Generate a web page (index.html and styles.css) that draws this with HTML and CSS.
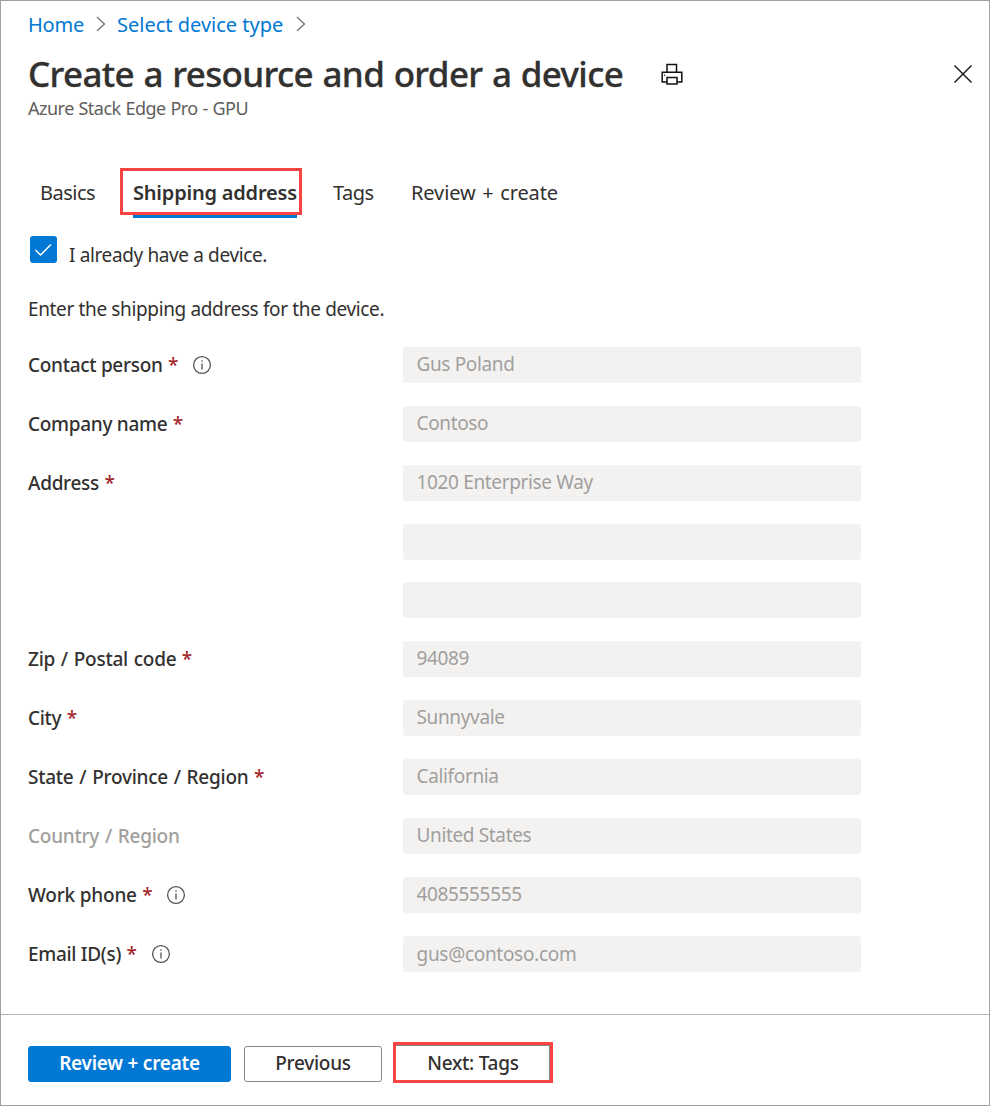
FILE: index.html
```html
<!DOCTYPE html>
<html lang="en">
<head>
<meta charset="utf-8">
<title>Create a resource and order a device</title>
<link rel="stylesheet" href="styles.css">
</head>
<body>
<main class="blade">
  <nav class="breadcrumb">
    <a class="crumb-home">Home</a>
    <svg class="chevron" width="10" height="16" viewBox="0 0 10 16"><path d="M1 1l7.500 7L1 15"/></svg>
    <a class="crumb-type">Select device type</a>
    <svg class="chevron" width="10" height="16" viewBox="0 0 10 16"><path d="M1 1l7.500 7L1 15"/></svg>
  </nav>
  <header class="header">
    <h1 class="title">Create a resource and order a device</h1>
    <svg class="print" width="22" height="22" viewBox="0 0 22 22"><path d="M6 9V1.500h9.500V9M5.500 19H1.200V9.200h19.600V19H16M6 14.500h10V21H6z"/><path class="dot" d="M3 11.500h1.200v1.200H3z"/></svg>
    <svg class="close" width="20" height="20" viewBox="0 0 20 20"><path d="M1.500 1.500l17 17M18.500 1.500l-17 17"/></svg>
  </header>
  <p class="subtitle">Azure Stack Edge Pro - GPU</p>
  <div class="tabs">
    <a class="tab tab-basics">Basics</a>
    <a class="tab tab-active">Shipping address</a>
    <a class="tab tab-tags">Tags</a>
    <a class="tab tab-review">Review + create</a>
  </div>
  <label class="device-check">
    <span class="checkbox"><svg width="27" height="27" viewBox="0 0 27 27"><path d="M5.500 14l5 5L21 8.500"/></svg></span>
    <span class="check-text">I already have a device.</span>
  </label>
  <p class="intro">Enter the shipping address for the device.</p>
  <form class="form">
    <div class="label"><span>Contact person</span><b class="req">*</b><svg class="info" width="20" height="20" viewBox="0 0 20 20"><circle cx="10" cy="10" r="8.400"/><path d="M10 8.500v6M10 5.200v1.600"/></svg></div><div class="field">Gus Poland</div>
    <div class="label"><span>Company name</span><b class="req">*</b></div><div class="field">Contoso</div>
    <div class="label"><span>Address</span><b class="req">*</b></div><div class="field">1020 Enterprise Way</div>
    <div class="label"></div><div class="field"></div>
    <div class="label"></div><div class="field"></div>
    <div class="label slashed"><span>Zip / Postal code</span><b class="req">*</b></div><div class="field">94089</div>
    <div class="label"><span>City</span><b class="req">*</b></div><div class="field">Sunnyvale</div>
    <div class="label slashed"><span>State / Province / Region</span><b class="req">*</b></div><div class="field">California</div>
    <div class="label slashed disabled"><span>Country / Region</span></div><div class="field">United States</div>
    <div class="label phone"><span>Work phone</span><b class="req">*</b><svg class="info" width="20" height="20" viewBox="0 0 20 20"><circle cx="10" cy="10" r="8.400"/><path d="M10 8.500v6M10 5.200v1.600"/></svg></div><div class="field">4085555555</div>
    <div class="label email"><span>Email ID(s)</span><b class="req">*</b><svg class="info" width="20" height="20" viewBox="0 0 20 20"><circle cx="10" cy="10" r="8.400"/><path d="M10 8.500v6M10 5.200v1.600"/></svg></div><div class="field email">gus@contoso.com</div>
  </form>
  <footer class="footer">
    <button class="btn primary">Review + create</button>
    <button class="btn previous">Previous</button>
    <button class="btn next">Next: Tags</button>
  </footer>
</main>
</body>
</html>
```
FILE: styles.css
```css
* { box-sizing: border-box; }
body { margin: 0; background: #fff; font-family: "Noto Sans", "Open Sans", sans-serif; color: #323130; }
p, h1 { margin: 0; }
svg { fill: none; flex: none; }
a, p, h1, span, .field, .btn { white-space: nowrap; }
.blade { width: 990px; height: 1106px; border: 1px solid #a0a0a0; display: flex; flex-direction: column; overflow: hidden; }
.breadcrumb { display: flex; align-items: center; height: 30px; margin-top: 8px; padding-left: 27px; font-size: 20px; letter-spacing: -.2px; color: #0078d4; }
.crumb-home { width: 68px; }
.crumb-type { width: 168px; margin-left: 11px; letter-spacing: 0; }
.crumb-type + .chevron { margin-left: 11px; }
.chevron { stroke: #6b6b6b; stroke-width: 1.2; }
.header { display: flex; align-items: center; height: 50px; margin-top: 10px; padding-left: 27px; }
.title { width: 633px; font-size: 35px; line-height: 48px; margin-top: -1px; font-weight: 500; letter-spacing: -.65px; word-spacing: 1px; -webkit-text-stroke: .3px #323130; }
.print { stroke: #111; stroke-width: 1.5; }
.print .dot { fill: #111; stroke: none; }
.close { margin-left: 270px; stroke: #111; stroke-width: 1.4; }
.subtitle { height: 24px; line-height: 24px; padding-left: 27px; font-size: 18px; letter-spacing: -.5px; word-spacing: .5px; color: #605e5c; margin-top: -3px; }
.tabs { display: flex; height: 50px; margin-top: 48px; padding-left: 39px; font-size: 20px; line-height: 50px; letter-spacing: -.5px; }
.tab-basics { width: 80px; }
.tab-active { position: relative; width: 182px; height: 47px; border: 3px solid #fb4343; padding-left: 10px; line-height: 44px; font-weight: 600; letter-spacing: -.2px; }
.tab-active::after { content: ""; position: absolute; left: 10px; top: 44px; width: 164px; height: 3px; background: #0078d4; }
.tab-tags { width: 78px; margin-left: 31px; }
.tab-review { letter-spacing: -.1px; word-spacing: 1.5px; }
.device-check { display: flex; height: 40px; margin-top: 18px; padding-left: 29px; font-size: 19px; letter-spacing: -.37px; }
.checkbox { width: 27px; height: 27px; border-radius: 3px; background: #0078d4; }
.checkbox svg { display: block; stroke: #fff; stroke-width: 1.5; }
.check-text { margin-left: 12px; line-height: 38px; }
.intro { height: 30px; line-height: 30px; margin-top: 18px; padding-left: 27px; font-size: 19px; letter-spacing: -.36px; }
.form { display: grid; grid-template-columns: 375px 458px; grid-auto-rows: 36px; row-gap: 22.88px; margin-top: 22.9px; padding-left: 27px; font-size: 19px; letter-spacing: -.35px; }
.label { display: flex; align-items: center; font-weight: 500; letter-spacing: -.3px; }
.slashed { letter-spacing: -.25px; word-spacing: 1.1px; }
.phone { letter-spacing: -.2px; }
.req { margin-left: 5.500px; color: #a4262c; font-weight: 500; }
.info { margin-left: 14px; stroke: #555; stroke-width: 1.3; }
.phone .info { margin-left: 13px; }
.disabled, .field { color: #a19f9d; }
.field { background: #f3f2f1; border-radius: 3px; line-height: 34px; padding-left: 13.500px; }
.label.email { padding-top: 1px; }
.field.email { line-height: 36px; letter-spacing: -.3px; }
.footer { display: flex; margin-top: auto; height: 91px; border-top: 1px solid #b3b3b3; padding: 27px 0 0 27px; }
.btn { font: 500 19px/20px "Noto Sans", sans-serif; letter-spacing: -.25px; color: #323130; height: 36px; margin-top: 4px; padding: 0 0 2px; border: 1px solid #8a8886; border-radius: 3px; background: #fff; }
.primary { width: 203px; color: #fff; background: #0078d4; border-color: #0078d4; font-weight: 600; }
.previous { width: 138px; margin-left: 13px; }
.next { width: 160px; height: 41px; margin: 0 0 0 11px; padding: 0; border: 3px solid #fb4343; border-radius: 0; box-shadow: inset -1px 1px #8a8886; }
```
